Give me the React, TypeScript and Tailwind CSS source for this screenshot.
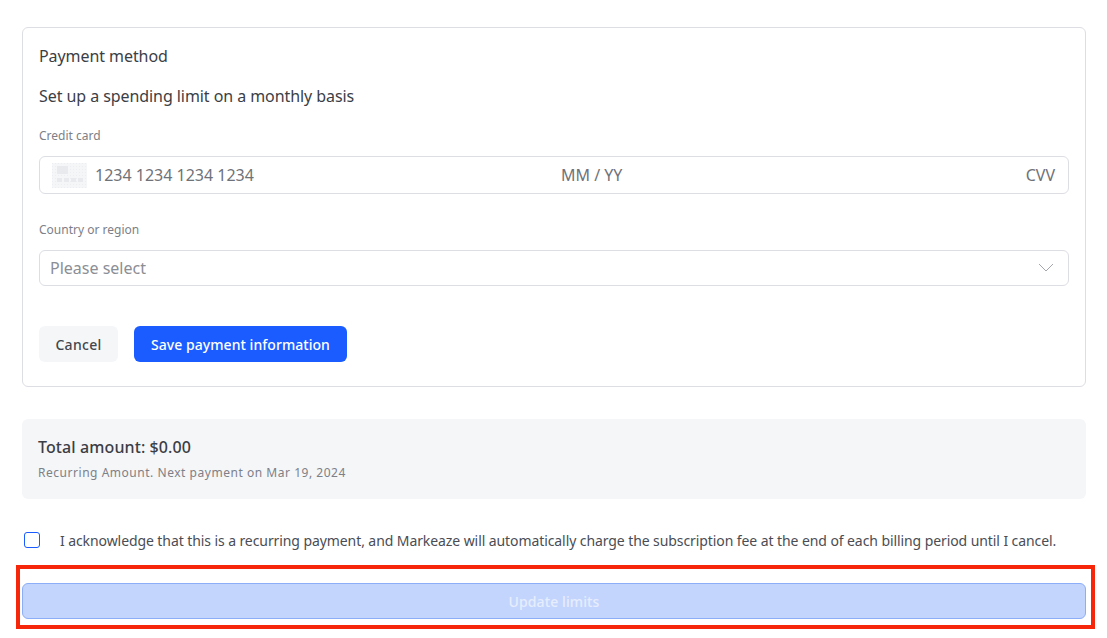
import React from 'react';

const CardThumb = () => (
  <svg width="35" height="25" viewBox="0 0 35 25" className="mr-2 shrink-0">
    <defs>
      <pattern id="speckle" width="3" height="3" patternUnits="userSpaceOnUse">
        <rect width="3" height="3" fill="#f5f6f8" />
        <rect width="1" height="1" fill="#eceef1" />
      </pattern>
    </defs>
    <rect width="35" height="25" fill="url(#speckle)" />
    <rect x="5" y="3" width="11" height="8" fill="#e8eaed" />
    <rect x="5" y="15" width="5" height="4" fill="#e8eaed" />
    <rect x="12" y="15" width="5" height="4" fill="#e8eaed" />
    <rect x="19" y="15" width="5" height="4" fill="#e8eaed" />
    <rect x="26" y="15" width="5" height="4" fill="#e8eaed" />
  </svg>
);

export default function App() {
  return (
    <div className="relative h-[638px] w-[1107px] overflow-hidden bg-white pl-[22px] pr-[21px] pt-[27px] font-['Noto_Sans',sans-serif] text-[#3b3e45]">
      {/* Payment form */}
      <section className="h-[360px] rounded-md border border-[#dcdee4] px-4 pt-4">
        <h2 className="text-base leading-6 tracking-[-0.07px]">Payment method</h2>
        <p className="mt-4 text-base leading-6 tracking-[-0.07px]">Set up a spending limit on a monthly basis</p>

        <label className="mt-5 block text-xs leading-4 text-[#7d8087]">Credit card</label>
        <div className="mt-3 flex h-[38px] items-center rounded-md border border-[#dcdee4] pl-3 pr-[13px] text-base text-[#6f7278]">
          <CardThumb />
          <span className="w-[466px]">1234 1234 1234 1234</span>
          <span>MM / YY</span>
          <span className="ml-auto">CVV</span>
        </div>

        <label className="mt-7 block text-xs leading-4 text-[#7d8087]">Country or region</label>
        <div className="mt-3 flex h-9 items-center justify-between rounded-md border border-[#dcdee4] pl-2.5 pr-3.5 text-base text-[#8b8e95]">
          <span>Please select</span>
          <svg width="16" height="10" viewBox="0 0 16 10" fill="none" stroke="#a3a6ad" strokeWidth="1">
            <path d="M1 1l7 7 7-7" />
          </svg>
        </div>

        <div className="mt-10 flex gap-4">
          <button className="h-9 w-[79px] rounded-md bg-[#f5f6f8] pt-0.5 text-sm font-medium tracking-[0.3px] text-[#43464d]">Cancel</button>
          <button className="h-9 w-[213px] rounded-md bg-[#1a5cff] pt-0.5 text-sm font-medium tracking-[0.05px] text-white">Save payment information</button>
        </div>
      </section>

      {/* Summary */}
      <section className="mt-8 h-20 rounded-md bg-[#f5f6f8] px-4 pt-[17px]">
        <p className="text-base font-medium leading-[22px] tracking-[0.1px]">Total amount: $0.00</p>
        <p className="mt-[7px] text-xs leading-4 tracking-[0.53px] text-[#7d8087]">Recurring Amount. Next payment on Mar 19, 2024</p>
      </section>

      {/* Acknowledgement */}
      <div className="mt-[33px] flex items-center pl-0.5">
        <span className="h-4 w-4 shrink-0 rounded-[3px] border border-[#1a5cff] bg-white" />
        <p className="ml-5 translate-y-px whitespace-nowrap text-sm leading-4 tracking-[-0.085px] text-[#4a4d54]">
          I acknowledge that this is a recurring payment, and Markeaze will automatically charge the subscription fee at the end of each billing period until I cancel.
        </p>
      </div>

      <button className="mt-[35px] block h-9 w-full rounded-md border border-[#8cadf7] bg-[#c3d5fc] pt-0.5 text-sm font-medium tracking-[0.1px] text-[#e6edfe]">
        Update limits
      </button>

      {/* Red annotation frame */}
      <div className="pointer-events-none absolute left-4 top-[565px] h-16 w-[1079px] border-4 border-[#f5260a]" />
    </div>
  );
}
